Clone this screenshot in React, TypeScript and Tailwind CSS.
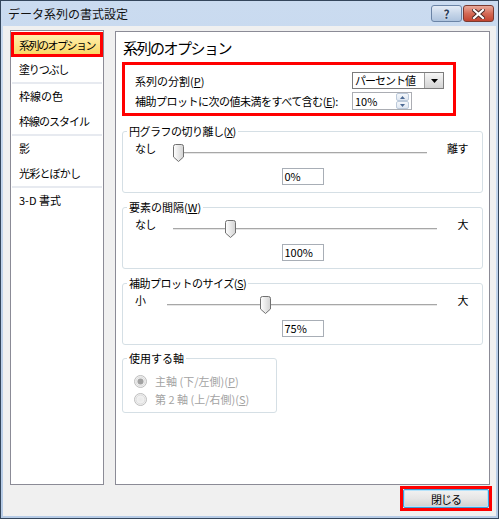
import React from "react";

const U = ({ c }: { c: string }) => (
  <span className="underline underline-offset-[1px] decoration-[1px]">{c}</span>
);

function Thumb() {
  return (
    <svg width="11" height="18" viewBox="0 0 11 18">
      <defs>
        <linearGradient id="tg" x1="0" y1="0" x2="1" y2="0">
          <stop offset="0" stopColor="#ffffff" />
          <stop offset="1" stopColor="#d2d2d2" />
        </linearGradient>
      </defs>
      <path
        d="M0.5 2.5 Q0.5 0.5 2.5 0.5 H8.5 Q10.5 0.5 10.5 2.5 V13 L5.5 17.5 L0.5 13 Z"
        fill="url(#tg)"
        stroke="#707070"
      />
    </svg>
  );
}

function SliderBlock({
  legend,
  left,
  right,
  leftW,
  rightW,
  thumbPos,
  value,
  mt,
  legendCls,
}: {
  legend: React.ReactNode;
  left: string;
  right: string;
  leftW: string;
  rightW: string;
  thumbPos: string;
  value: string;
  mt: string;
  legendCls: string;
}) {
  return (
    <fieldset className={`mx-[6px] ${mt} border border-[#d5dfe5] rounded-[3px] min-w-0`}>
      <legend className={`ml-[4px] px-[2px] leading-[14px] ${legendCls}`}>{legend}</legend>
      <div className="flex flex-col pt-[1px] pb-[7px]">
        <div className="flex h-[24px] items-start pl-[12px] pr-[14px]">
          <div className={`${leftW} shrink-0 mt-[2px] leading-[14px] tracking-[-0.8px]`}>{left}</div>
          <div className="relative flex-1 h-[24px]">
            <div className="absolute left-0 right-0 top-[13px] h-[1px] bg-[#a7a7a7]" />
            <div className="absolute left-0 right-0 top-[14px] h-[1px] bg-[#e6e6e6]" />
            <div className={`absolute top-[5px] ${thumbPos} w-[11px] h-[18px]`}>
              <Thumb />
            </div>
          </div>
          <div className={`${rightW} shrink-0 mt-[2px] leading-[14px] text-right tracking-[-0.5px]`}>{right}</div>
        </div>
        <div className="flex justify-center mt-[5px]">
          <div className="w-[42px] h-[17px] border border-[#a8aeb6] bg-white pl-[2px] leading-[15px]">
            {value}
          </div>
        </div>
      </div>
    </fieldset>
  );
}

function Radio({ checked }: { checked?: boolean }) {
  return (
    <svg width="13" height="13" viewBox="0 0 13 13">
      <defs>
        <radialGradient id="rg" cx="0.5" cy="0.5" r="0.6">
          <stop offset="0" stopColor="#e9e9e9" />
          <stop offset="1" stopColor="#f8f8f8" />
        </radialGradient>
      </defs>
      <circle cx="6.5" cy="6.5" r="6" fill="url(#rg)" stroke="#bdbdbd" />
      <circle cx="6.5" cy="6.5" r="4.5" fill="none" stroke="#dcdcdc" />
      {checked && <circle cx="6.5" cy="6.5" r="3" fill="#a2a2a2" />}
    </svg>
  );
}

export default function App() {
  const font = "font-['Noto_Sans_CJK_JP','Noto_Sans_CJK_SC',sans-serif]";
  return (
    <div
      className={`w-[499px] h-[519px] border border-[#34465c] bg-gradient-to-b from-[#cadbf0] to-[#b6cbe6] flex flex-col text-black text-[11px] ${font}`}
    >
      {/* Title bar */}
      <div className="h-[25px] flex items-start shrink-0">
        <div className="ml-[7px] mt-[5px] leading-[16px] text-[12px] text-[#111]">
          データ系列の書式設定
        </div>
        <div className="flex-1" />
        <div className="flex mt-[4px] mr-[4px] gap-[1px]">
          <div className="w-[31px] h-[17px] rounded-[3px] border border-[#6b84a6] bg-gradient-to-b from-[#e4ecf6] via-[#c7d6e9] to-[#aec3de] flex items-center justify-center">
            <span className="text-[12px] leading-[12px] font-bold text-[#2a3d5a] [text-shadow:0_0_2px_#fff]">?</span>
          </div>
          <div className="w-[31px] h-[17px] rounded-[3px] border border-[#7a3a30] bg-gradient-to-b from-[#e9a99a] via-[#d46a56] to-[#c2432f] flex items-center justify-center">
            <svg width="13" height="10" viewBox="0 0 13 10">
              <path d="M2 1 L11 9 M11 1 L2 9" stroke="#4a2a26" strokeWidth="4" strokeLinecap="square" />
              <path d="M2 1 L11 9 M11 1 L2 9" stroke="#ffffff" strokeWidth="2.2" strokeLinecap="square" />
            </svg>
          </div>
        </div>
      </div>

      {/* Client */}
      <div className="flex-1 mx-[2px] mb-[2px] bg-[#f0f0f0] flex flex-col">
        <div className="flex pl-[7px] pr-[6px] pt-[4px] items-start">
          {/* Left list */}
          <div className="w-[94px] h-[455px] border border-[#8b8b96] bg-white shrink-0 flex flex-col whitespace-nowrap">
            <div className="mt-[1px] h-[25px] border-[3px] border-[#ff0000] bg-gradient-to-b from-[#fff0ad] to-[#fbd765] pl-[5px] flex items-center leading-[14px] tracking-[-1.5px]">
              系列のオプション
            </div>
            <div className="h-[25px] pl-[8px] flex items-center tracking-[-1.2px]">塗りつぶし</div>
            <div className="h-[2px] mx-[1px] bg-[#e7eaf0]" />
            <div className="h-[25px] pl-[8px] flex items-center">枠線の色</div>
            <div className="h-[25px] pl-[8px] flex items-center tracking-[-1px]">枠線のスタイル</div>
            <div className="h-[2px] mx-[1px] bg-[#e7eaf0]" />
            <div className="h-[25px] pl-[8px] flex items-center">影</div>
            <div className="h-[25px] pl-[8px] flex items-center tracking-[-0.8px]">光彩とぼかし</div>
            <div className="h-[2px] mx-[1px] bg-[#e7eaf0]" />
            <div className="h-[25px] pl-[8px] flex items-center">3-D 書式</div>
          </div>

          <div className="w-[11px] shrink-0" />

          {/* Right panel */}
          <div className="w-[375px] h-[454px] mt-[1px] border border-[#8b8b96] bg-white flex flex-col">
            <div className="pt-[6px] pl-[7px] h-[26px] shrink-0">
              <div className="text-[15px] leading-[20px] tracking-[-1.5px]">系列のオプション</div>
            </div>
            <div className="ml-[6px] mt-[4px] w-[334px] border-[3px] border-[#ff0000] flex flex-col pl-[10px] pt-[7px] pb-[3px]">
              <div className="flex items-center h-[17px]">
                <div className="w-[217px] shrink-0 leading-[14px]">
                  系列の分割(<U c="P" />)
                </div>
                <div className="w-[92px] h-[17px] border border-[#7c7c7c] bg-white flex">
                  <div className="flex-1 pl-[2px] leading-[15px] tracking-[-1px] whitespace-nowrap">パーセント値</div>
                  <div className="w-[19px] h-[15px] border-l border-[#9c9c9c] bg-gradient-to-b from-[#f6f6f6] to-[#d3d3d3] flex items-center justify-center">
                    <svg width="7" height="4" viewBox="0 0 7 4">
                      <path d="M0 0 H7 L3.5 4 Z" fill="#000" />
                    </svg>
                  </div>
                </div>
              </div>
              <div className="flex items-center h-[18px] mt-[3px]">
                <div className="w-[217px] shrink-0 leading-[14px] whitespace-nowrap tracking-[-0.5px]">
                  補助プロットに次の値未満をすべて含む(<U c="E" />):
                </div>
                <div className="w-[60px] h-[18px] border border-[#abadb3] bg-white flex">
                  <div className="flex-1 pl-[2px] leading-[16px]">10%</div>
                  <div className="w-[13px] mr-[2px] flex flex-col">
                    <div className="h-[8px] border border-[#bccadb] rounded-[2px] bg-gradient-to-b from-[#f4f7fb] to-[#dfe7f1] flex items-center justify-center">
                      <svg width="5" height="3" viewBox="0 0 5 3">
                        <path d="M0 3 H5 L2.5 0 Z" fill="#4d6a94" />
                      </svg>
                    </div>
                    <div className="h-[8px] border border-[#bccadb] rounded-[2px] bg-gradient-to-b from-[#f4f7fb] to-[#dfe7f1] flex items-center justify-center">
                      <svg width="5" height="3" viewBox="0 0 5 3">
                        <path d="M0 0 H5 L2.5 3 Z" fill="#4d6a94" />
                      </svg>
                    </div>
                  </div>
                </div>
              </div>
            </div>

            <SliderBlock
              legend={<>円グラフの切り離し(<U c="X" />)</>}
              legendCls="tracking-[-0.5px]"
              left="なし"
              right="離す"
              leftW="w-[40px]"
              rightW="w-[41px]"
              thumbPos="left-[-2px]"
              value="0%"
              mt="mt-[8px]"
            />
            <SliderBlock
              legend={<>要素の間隔(<U c="W" />)</>}
              legendCls="tracking-[0px]"
              left="なし"
              right="大"
              leftW="w-[38px]"
              rightW="w-[31px]"
              thumbPos="left-[52px]"
              value="100%"
              mt="mt-[7px]"
            />
            <SliderBlock
              legend={<>補助プロットのサイズ(<U c="S" />)</>}
              legendCls="tracking-[-0.5px]"
              left="小"
              right="大"
              leftW="w-[32px]"
              rightW="w-[31px]"
              thumbPos="left-[93px]"
              value="75%"
              mt="mt-[7px]"
            />

            <fieldset className="ml-[6px] mt-[6px] w-[155px] border border-[#d5dfe5] rounded-[3px] min-w-0">
              <legend className="ml-[4px] px-[2px] leading-[14px]">使用する軸</legend>
              <div className="flex flex-col pl-[11px] pt-[8px] pb-[5px] text-[#a3a3a3] whitespace-nowrap">
                <div className="flex items-center h-[16px]">
                  <Radio checked />
                  <span className="ml-[8px] leading-[14px]">
                    主軸 (下/左側)(<U c="P" />)
                  </span>
                </div>
                <div className="flex items-center h-[16px] mt-[2px]">
                  <Radio />
                  <span className="ml-[8px] leading-[14px]">
                    第 2 軸 (上/右側)(<U c="S" />)
                  </span>
                </div>
              </div>
            </fieldset>
          </div>
        </div>

        {/* Bottom bar */}
        <div className="flex justify-end pr-[4px] mt-[1px]">
          <div className="w-[92px] h-[25px] border-[3px] border-[#ff0000]">
            <div className="w-full h-full border border-[#3c9fd8] rounded-[2px] bg-gradient-to-b from-[#f2f2f2] via-[#e6e6e6] to-[#d0d0d0] shadow-[inset_0_0_0_1px_#b5e3fb] flex items-center justify-center leading-[14px] tracking-[-1px]">
              閉じる
            </div>
          </div>
        </div>
      </div>
    </div>
  );
}
